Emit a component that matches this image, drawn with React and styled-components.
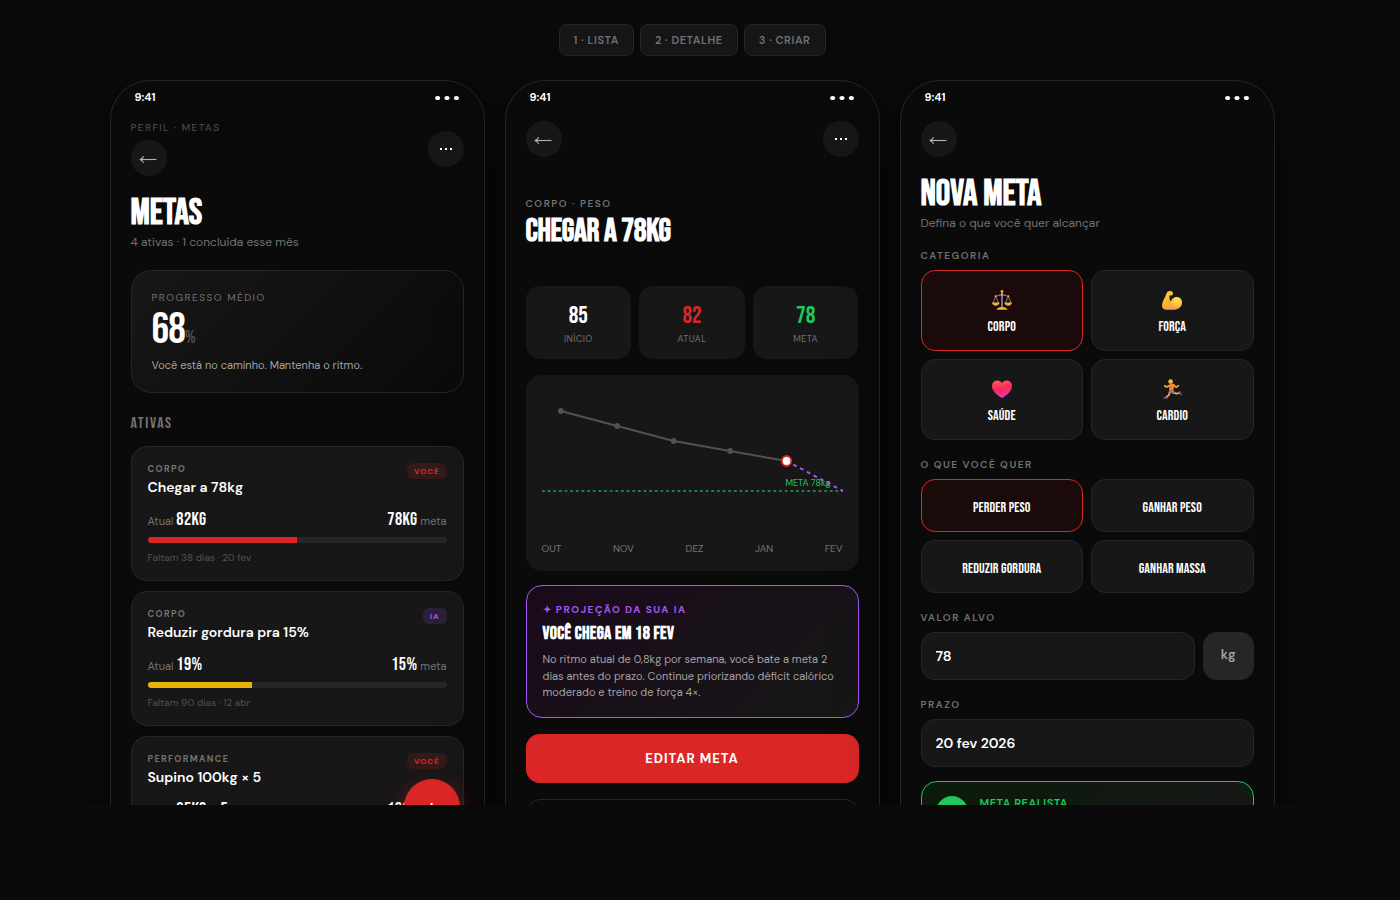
import React from "react";
import styled, { createGlobalStyle } from "styled-components";

const GlobalStyle = createGlobalStyle`
  * {
    box-sizing: border-box;
  }
  body {
    margin: 0;
    background: #0a0a0a;
    color: #fff;
    font-family: "DM Sans", "Open Sans", sans-serif;
  }
  h1, h2, h3, p {
    margin: 0;
  }
  button, input {
    font-family: inherit;
    margin: 0;
  }
  button {
    cursor: pointer;
  }
`;

const goals = [
  {
    category: "Corpo",
    title: "Chegar a 78kg",
    owner: "Você",
    current: "82KG",
    target: "78KG",
    unit: "meta",
    percent: 50,
    color: "#dc2626",
    footer: "Faltam 38 dias · 20 fev",
  },
  {
    category: "Corpo",
    title: "Reduzir gordura pra 15%",
    owner: "IA",
    current: "19%",
    target: "15%",
    unit: "meta",
    percent: 35,
    color: "#eab308",
    footer: "Faltam 90 dias · 12 abr",
  },
  {
    category: "Performance",
    title: "Supino 100kg × 5",
    owner: "Você",
    current: "85KG × 5",
    target: "100KG × 5",
    percent: 70,
    color: "#22c55e",
    footer: "Faltam 60 dias · 14 mar",
  },
];

const points = [
  [20, 20],
  [80, 35],
  [140, 50],
  [200, 60],
];

function BackButton() {
  return (
    <RoundButton aria-label="Voltar">
      <svg width="20" height="10" viewBox="0 0 20 10" fill="none" stroke="#b4b4b4" strokeWidth="1.1">
        <path d="M1 6.5h16.5" />
        <path d="M4.6 3.2C3.8 5 2.6 6.1.8 6.5 2.6 6.9 3.8 8 4.6 9.8" />
      </svg>
    </RoundButton>
  );
}

function MoreButton() {
  return (
    <RoundButton aria-label="Mais opções">
      <svg width="12" height="2" viewBox="0 0 12 2" fill="#fff">
        <rect width="2" height="2" />
        <rect x="5" width="2" height="2" />
        <rect x="10" width="2" height="2" />
      </svg>
    </RoundButton>
  );
}

function StatusBar() {
  return (
    <Status>
      <span>9:41</span>
      <svg width="25" height="6" viewBox="0 0 25 6" fill="#fff">
        <ellipse cx="2.6" cy="4" rx="2.6" ry="2.1" />
        <ellipse cx="12" cy="4" rx="2.6" ry="2.1" />
        <ellipse cx="21.4" cy="4" rx="2.6" ry="2.1" />
      </svg>
    </Status>
  );
}

function ScaleIcon() {
  return (
    <svg width="20" height="20" viewBox="0 0 20 20" fill="none">
      <path d="M10 2v16" stroke="#9b8aa3" strokeWidth="1.6" />
      <path d="M3.5 6.2C6 6.4 7 4.6 10 4.6s4 1.8 6.5 1.6" stroke="#8d7b97" strokeWidth="1.2" />
      <path d="M3.6 6.4L1 13M3.6 6.4L6.6 13M16.4 6.4L13.4 13M16.4 6.4L19 13" stroke="#a395ab" strokeWidth=".8" />
      <path d="M0 12.6h7.6c-.2 2-1.7 3.2-3.8 3.2S.2 14.6 0 12.6z" fill="#f5b13d" />
      <path d="M12.4 12.6H20c-.2 2-1.7 3.2-3.8 3.2s-3.6-1.2-3.8-3.2z" fill="#f5b13d" />
      <path d="M4.5 19.8c.4-1.9 2.6-2.9 5.5-2.9s5.1 1 5.5 2.9z" fill="#fbb82f" />
      <circle cx="10" cy="1.5" r="1.4" fill="#f9a83a" />
      <circle cx="10" cy="4.8" r="1.1" fill="#f9a83a" />
      <circle cx="3.6" cy="6.3" r="1" fill="#f9a83a" />
      <circle cx="16.4" cy="6.3" r="1" fill="#f9a83a" />
    </svg>
  );
}

function ArmIcon() {
  return (
    <svg width="20" height="20" viewBox="0 0 20 20">
      <defs>
        <linearGradient id="arm" x1="0" y1="0" x2="0.4" y2="1">
          <stop offset="0" stopColor="#ffd13d" />
          <stop offset=".7" stopColor="#fdb52f" />
          <stop offset="1" stopColor="#f29a5b" />
        </linearGradient>
        <radialGradient id="bicep" cx=".55" cy=".3" r=".7">
          <stop offset="0" stopColor="#ffe14f" />
          <stop offset="1" stopColor="#fdb833" />
        </radialGradient>
      </defs>
      <path
        d="M4.6 3.2C5.2 1.5 6.8.6 8.5 1c1.6.3 2.4 1.1 2.5 2.3.1 1.3-.6 2-1.8 2.1l-1.7.1c-.3 2 .1 4.2 1.2 6 1.4-3 3.6-4.7 6.3-4.5 3 .2 5 2.6 5 5.8 0 4.3-3.5 7-9 7H4.5C1.6 19.8 0 18 0 15.5 0 11.5 3.2 7.5 4.6 3.2z"
        fill="url(#arm)"
      />
      <circle cx="14.7" cy="12.2" r="5.2" fill="url(#bicep)" />
      <path d="M6 8.5c.2 2.2 1 4.1 2.7 5.7" stroke="#ee9a2d" strokeWidth=".7" fill="none" />
    </svg>
  );
}

function HeartIcon() {
  return (
    <svg width="20" height="20" viewBox="0 0 20 20">
      <defs>
        <linearGradient id="heart" x1="0.3" y1="0" x2="0.5" y2="1">
          <stop offset="0" stopColor="#ff5a5a" />
          <stop offset=".5" stopColor="#f8285a" />
          <stop offset="1" stopColor="#ee35c0" />
        </linearGradient>
      </defs>
      <path
        d="M10 4C8.9 2.3 7.3 1.4 5.3 1.4 2.2 1.4 0 3.8 0 7c0 5.4 5.4 9 8.5 11.3.9.7 2.1.7 3 0C14.6 16 20 12.4 20 7c0-3.2-2.2-5.6-5.3-5.6-2 0-3.6.9-4.7 2.6z"
        fill="url(#heart)"
      />
    </svg>
  );
}

function RunnerIcon() {
  return (
    <svg width="20" height="20" viewBox="0 0 20 20" fill="none" strokeLinecap="round" strokeLinejoin="round">
      <path d="M8.4 6.2L4.6 8 2.6 6.8" stroke="#f7ae2b" strokeWidth="1.7" />
      <path d="M11 13.5l3.5 1.2 3-.8" stroke="#f7ae2b" strokeWidth="1.8" />
      <path d="M8.3 13l-1.7 3.4-2.4 1.8" stroke="#f7ae2b" strokeWidth="1.8" />
      <path d="M17.6 12.8l1.6 2.7" stroke="#5b4a94" strokeWidth="1.7" />
      <path d="M2 18.6l2.8.8" stroke="#5b4a94" strokeWidth="1.7" />
      <path d="M7.4 11.2h4l1.8 2-2 1.9-1.8-1.5-1.7 1.4-1.7-.8z" fill="#8d8296" />
      <path d="M7.6 4.8l3.6-.4 1.3 2.3-1.3 4.8-4.2-.3z" fill="#fb7d3c" />
      <path d="M11.7 5.8l2.3 2.5 2.5-1.6" stroke="#f7ae2b" strokeWidth="1.6" />
      <circle cx="8.6" cy="2.5" r="2.3" fill="#fcb932" />
    </svg>
  );
}

function ListScreen() {
  return (
    <Phone>
      <StatusBar />
      <Content>
        <Header>
          <div>
            <Crumb>Perfil · Metas</Crumb>
            <BackButton />
          </div>
          <MoreButton />
        </Header>
        <Title>Metas</Title>
        <Subtitle>4 ativas · 1 concluída esse mês</Subtitle>

        <SummaryCard>
          <Label>Progresso médio</Label>
          <BigNumber>
            68<small>%</small>
          </BigNumber>
          <SummaryText>Você está no caminho. Mantenha o ritmo.</SummaryText>
        </SummaryCard>

        <SectionTitle>Ativas</SectionTitle>
        <GoalList>
          {goals.map((goal) => (
            <GoalCard key={goal.title}>
              <GoalTop>
                <div>
                  <GoalCategory>{goal.category}</GoalCategory>
                  <GoalTitle>{goal.title}</GoalTitle>
                </div>
                <Badge $ai={goal.owner === "IA"}>{goal.owner}</Badge>
              </GoalTop>
              <GoalValues>
                <span>
                  Atual <b>{goal.current}</b>
                </span>
                <span>
                  <b>{goal.target}</b> {goal.unit}
                </span>
              </GoalValues>
              <Track>
                <Fill $color={goal.color} style={{ width: `${goal.percent}%` }} />
              </Track>
              <GoalFooter>{goal.footer}</GoalFooter>
            </GoalCard>
          ))}
        </GoalList>
      </Content>
      <AddButton aria-label="Nova meta">+</AddButton>
    </Phone>
  );
}

function DetailScreen() {
  return (
    <Phone>
      <StatusBar />
      <Content>
        <Header>
          <BackButton />
          <MoreButton />
        </Header>
        <DetailHeading>
          <Label $weight={600}>Corpo · Peso</Label>
          <DetailTitle>Chegar a 78kg</DetailTitle>
        </DetailHeading>

        <Stats>
          <Stat $color="#fff">
            <b>85</b>
            <span>Início</span>
          </Stat>
          <Stat $color="#dc2626">
            <b>82</b>
            <span>Atual</span>
          </Stat>
          <Stat $color="#22c55e">
            <b>78</b>
            <span>Meta</span>
          </Stat>
        </Stats>

        <ChartCard>
          <Plot>
            <TargetLabel>META 78kg</TargetLabel>
            <svg viewBox="0 0 320 140" preserveAspectRatio="none">
              <path d="M0 100H320" stroke="#22c55e" strokeWidth="2" strokeDasharray="3 3" opacity=".6" />
              <path d="M20 20L80 35L140 50L200 60L260 70" stroke="#525252" strokeWidth="2" fill="none" />
              <path d="M260 70L320 100" stroke="#a855f7" strokeWidth="2" strokeDasharray="4 4" />
              {points.map(([x, y]) => (
                <circle key={x} cx={x} cy={y} r="3" fill="#525252" />
              ))}
              <circle cx="260" cy="70" r="5" fill="#fff" stroke="#dc2626" strokeWidth="2" />
            </svg>
          </Plot>
          <Months>
            <span>OUT</span>
            <span>NOV</span>
            <span>DEZ</span>
            <span>JAN</span>
            <span>FEV</span>
          </Months>
        </ChartCard>

        <Projection>
          <Label $weight={700} $color="#a855f7">
            ✦ Projeção da sua IA
          </Label>
          <h2>Você chega em 18 fev</h2>
          <p>
            No ritmo atual de 0,8kg por semana, você bate a meta 2 dias antes do
            prazo. Continue priorizando déficit calórico moderado e treino de
            força 4×.
          </p>
        </Projection>

        <PrimaryButton>Editar meta</PrimaryButton>
        <OutlineButton>Concluir meta</OutlineButton>
      </Content>
    </Phone>
  );
}

function CreateScreen() {
  return (
    <Phone>
      <StatusBar />
      <Content>
        <Header>
          <BackButton />
        </Header>
        <Title>Nova meta</Title>
        <Subtitle>Defina o que você quer alcançar</Subtitle>

        <Form>
          <Field>
            <Label $weight={600}>Categoria</Label>
            <Options>
              <Option $active aria-pressed="true">
                <Emoji><ScaleIcon /></Emoji>
                <span>Corpo</span>
              </Option>
              <Option>
                <Emoji><ArmIcon /></Emoji>
                <span>Força</span>
              </Option>
              <Option>
                <Emoji><HeartIcon /></Emoji>
                <span>Saúde</span>
              </Option>
              <Option>
                <Emoji><RunnerIcon /></Emoji>
                <span>Cardio</span>
              </Option>
            </Options>
          </Field>
          <Field>
            <Label $weight={600}>O que você quer</Label>
            <Options>
              <Option $active aria-pressed="true">
                <span>Perder peso</span>
              </Option>
              <Option>
                <span>Ganhar peso</span>
              </Option>
              <Option>
                <span>Reduzir gordura</span>
              </Option>
              <Option>
                <span>Ganhar massa</span>
              </Option>
            </Options>
          </Field>
          <Field>
            <Label as="label" htmlFor="valor" $weight={600}>
              Valor alvo
            </Label>
            <InputRow>
              <Input id="valor" defaultValue="78" />
              <Unit>kg</Unit>
            </InputRow>
          </Field>
          <Field>
            <Label as="label" htmlFor="prazo" $weight={600}>
              Prazo
            </Label>
            <Input id="prazo" defaultValue="20 fev 2026" />
          </Field>
        </Form>

        <Realistic>
          <Check />
          <div>
            <h3>Meta realista</h3>
            <p>Ritmo de 0,8kg por semana é saudável.</p>
          </div>
        </Realistic>
      </Content>
    </Phone>
  );
}

function App() {
  return (
    <Page>
      <GlobalStyle />
      <Tabs>
        <Tab>1 · Lista</Tab>
        <Tab>2 · Detalhe</Tab>
        <Tab>3 · Criar</Tab>
      </Tabs>
      <Phones>
        <ListScreen />
        <DetailScreen />
        <CreateScreen />
      </Phones>
    </Page>
  );
}

const Page = styled.main`
  height: calc(100vh - 95px);
  padding: 24px 16px 0 0;
  overflow: hidden;
`;
const Tabs = styled.nav`
  display: flex;
  justify-content: center;
  gap: 6px;
  margin-bottom: 24px;
`;
const Tab = styled.button`
  height: 32px;
  padding: 0 14px;
  border: 1px solid #262626;
  border-radius: 8px;
  background: #171717;
  color: #737373;
  font-size: 11px;
  font-weight: 600;
  letter-spacing: 0.05em;
  text-transform: uppercase;
`;
const Phones = styled.div`
  display: flex;
  justify-content: center;
  align-items: flex-start;
  gap: 20px;
`;
const Phone = styled.section`
  position: relative;
  flex: 0 1 375px;
  min-width: 0;
  min-height: 812px;
  background: #0a0a0a;
  border: 1px solid #262626;
  border-radius: 40px;
  box-shadow: 0 20px 60px rgba(0, 0, 0, 0.5);
`;
const Status = styled.div`
  height: 32px;
  padding: 0 24px;
  display: flex;
  justify-content: space-between;
  align-items: center;
  font-size: 11px;
  font-weight: 700;
`;
const Content = styled.div`
  padding: 8px 20px 20px;
`;
const Header = styled.header`
  display: flex;
  justify-content: space-between;
  align-items: center;
  margin-bottom: 20px;
`;
const Crumb = styled.div`
  margin-bottom: 6px;
  color: #525252;
  font-size: 10px;
  line-height: 13px;
  letter-spacing: 0.15em;
  text-transform: uppercase;
`;
const RoundButton = styled.button`
  width: 36px;
  height: 36px;
  padding: 0;
  display: flex;
  justify-content: center;
  align-items: center;
  border: none;
  border-radius: 50%;
  background: #171717;
`;
const Title = styled.h1`
  font-family: "Bebas Neue", sans-serif;
  font-size: 36px;
  line-height: 36px;
  text-transform: uppercase;
`;
const Subtitle = styled.p`
  color: #737373;
  font-size: 12px;
  line-height: 20px;
`;
const Label = styled.div`
  display: block;
  color: ${(props) => props.$color || "#737373"};
  font-size: 10px;
  font-weight: ${(props) => props.$weight || 400};
  line-height: 13px;
  letter-spacing: 0.15em;
  text-transform: uppercase;
`;
const SummaryCard = styled.div`
  margin-top: 18px;
  padding: 20px;
  border: 1px solid #262626;
  border-radius: 20px;
  background: linear-gradient(135deg, #171717, #0a0a0a);
`;
const BigNumber = styled.div`
  margin: 4px 0 6px;
  font-family: "Bebas Neue", sans-serif;
  font-size: 44px;
  line-height: 44px;
  letter-spacing: -0.02em;
  small {
    color: #525252;
    font-size: 18px;
    line-height: 18px;
  }
`;
const SummaryText = styled.p`
  color: #a3a3a3;
  font-size: 11px;
  line-height: 14px;
`;
const SectionTitle = styled.h2`
  margin: 21px 0 12px;
  color: #737373;
  font-family: "Bebas Neue", sans-serif;
  font-size: 16px;
  font-weight: 400;
  line-height: 20px;
  letter-spacing: 0.1em;
`;
const GoalList = styled.div`
  display: flex;
  flex-direction: column;
  gap: 10px;
`;
const GoalCard = styled.article`
  padding: 16px;
  border: 1px solid #262626;
  border-radius: 16px;
  background: #171717;
`;
const GoalTop = styled.div`
  display: flex;
  justify-content: space-between;
  align-items: flex-start;
  margin-bottom: 13px;
`;
const GoalCategory = styled.div`
  margin-bottom: 3px;
  color: #737373;
  font-size: 9px;
  font-weight: 700;
  line-height: 12px;
  letter-spacing: 0.15em;
  text-transform: uppercase;
`;
const GoalTitle = styled.h3`
  font-size: 14px;
  font-weight: 600;
  line-height: 18px;
`;
const Badge = styled.span`
  padding: 0 7px;
  border-radius: 6px;
  background: ${(props) => (props.$ai ? "rgba(168, 85, 247, 0.15)" : "rgba(220, 38, 38, 0.15)")};
  color: ${(props) => (props.$ai ? "#a855f7" : "#dc2626")};
  font-size: 8px;
  font-weight: 700;
  line-height: 16px;
  letter-spacing: 0.1em;
  text-transform: uppercase;
`;
const GoalValues = styled.div`
  display: flex;
  justify-content: space-between;
  margin-bottom: 6px;
  color: #737373;
  font-size: 11px;
  line-height: 16px;
  b {
    color: #fff;
    font-family: "Bebas Neue", sans-serif;
    font-size: 18px;
    font-weight: 400;
    line-height: 22px;
    letter-spacing: 0.02em;
  }
`;
const Track = styled.div`
  height: 6px;
  border-radius: 3px;
  background: #262626;
  overflow: hidden;
`;
const Fill = styled.div`
  height: 100%;
  background: ${(props) => props.$color};
`;
const GoalFooter = styled.p`
  margin-top: 8px;
  color: #525252;
  font-size: 10px;
  line-height: 13px;
`;
const AddButton = styled.button`
  position: absolute;
  right: 24px;
  bottom: 56px;
  width: 56px;
  height: 56px;
  padding: 0;
  border: none;
  border-radius: 50%;
  background: #dc2626;
  color: #fff;
  font-size: 24px;
  box-shadow: 0 8px 24px rgba(220, 38, 38, 0.4);
`;
const DetailHeading = styled.div`
  padding: 20px 0 38px;
`;
const DetailTitle = styled.h1`
  margin-top: 6px;
  font-family: "Bebas Neue", sans-serif;
  font-size: 32px;
  line-height: 32px;
  letter-spacing: -0.01em;
`;
const Stats = styled.div`
  display: grid;
  grid-template-columns: repeat(3, 1fr);
  gap: 8px;
`;
const Stat = styled.div`
  padding: 14px 8px 13px;
  border-radius: 14px;
  background: #171717;
  text-align: center;
  b {
    display: block;
    margin-bottom: 1px;
    color: ${(props) => props.$color};
    font-family: "Bebas Neue", sans-serif;
    font-size: 24px;
    font-weight: 400;
    line-height: 32px;
  }
  span {
    display: block;
    color: #737373;
    font-size: 9px;
    line-height: 13px;
    letter-spacing: 0.05em;
    text-transform: uppercase;
  }
`;
const ChartCard = styled.div`
  margin: 16px 0 14px;
  padding: 16px;
  border-radius: 16px;
  background: #171717;
`;
const Plot = styled.div`
  position: relative;
  svg {
    position: relative;
    display: block;
    width: 100%;
    height: 140px;
    overflow: visible;
  }
`;
const TargetLabel = styled.span`
  position: absolute;
  top: 86px;
  right: 12px;
  color: #22c55e;
  font-size: 9px;
  line-height: 12px;
`;
const Months = styled.div`
  display: flex;
  justify-content: space-between;
  margin-top: 11px;
  color: #737373;
  font-size: 10px;
  line-height: 13px;
`;
const Projection = styled.div`
  margin-bottom: 16px;
  padding: 17px 16px 16px;
  border: 1px solid #a855f7;
  border-radius: 16px;
  background: linear-gradient(135deg, #1a0a1a, #171717);
  h2 {
    margin: 7px 0 6px;
    font-family: "Bebas Neue", sans-serif;
    font-size: 18px;
    line-height: 22px;
    letter-spacing: 0.02em;
  }
  p {
    color: #a3a3a3;
    font-size: 11px;
    line-height: 1.5;
  }
`;
const PrimaryButton = styled.button`
  display: block;
  width: 100%;
  padding: 16px;
  border: none;
  border-radius: 14px;
  background: #dc2626;
  color: #fff;
  font-size: 13px;
  font-weight: 700;
  line-height: 17px;
  letter-spacing: 1px;
  text-transform: uppercase;
`;
const OutlineButton = styled(PrimaryButton)`
  margin-top: 16px;
  border: 1px solid #262626;
  background: transparent;
  color: #a3a3a3;
`;
const Form = styled.div`
  display: flex;
  flex-direction: column;
  gap: 18px;
  margin-top: 16px;
`;
const Field = styled.div`
  display: flex;
  flex-direction: column;
  gap: 8px;
`;
const Options = styled.div`
  display: grid;
  grid-template-columns: 1fr 1fr;
  gap: 8px;
`;
const Option = styled.button`
  padding: 16px;
  border: 1px solid ${(props) => (props.$active ? "#dc2626" : "#262626")};
  border-radius: 14px;
  background: ${(props) => (props.$active ? "#1a0a0a" : "#171717")};
  color: #fff;
  font-family: "Bebas Neue", sans-serif;
  font-size: 14px;
  line-height: 15px;
  letter-spacing: 0.01em;
  text-align: center;
  span {
    display: block;
    margin-top: 4px;
  }
`;
const Emoji = styled.div`
  height: 26px;
  margin-bottom: 6px;
  display: flex;
  justify-content: center;
  align-items: center;
`;
const InputRow = styled.div`
  display: flex;
  gap: 8px;
`;
const Input = styled.input`
  flex: 1 1 auto;
  min-width: 0;
  width: 100%;
  height: 48px;
  padding: 0 14px;
  border: 1px solid #262626;
  border-radius: 14px;
  background: #171717;
  color: #fff;
  font-size: 14px;
  font-weight: 600;
  outline: none;
`;
const Unit = styled.div`
  padding: 0 18px;
  border-radius: 14px;
  background: #262626;
  color: #a3a3a3;
  font-size: 13px;
  font-weight: 600;
  line-height: 46px;
`;
const Realistic = styled.div`
  display: flex;
  gap: 12px;
  margin-top: 14px;
  padding: 14px;
  border: 1px solid #22c55e;
  border-radius: 16px;
  background: linear-gradient(135deg, #0a1a0a, #171717);
  h3 {
    color: #22c55e;
    font-size: 11px;
    font-weight: 600;
    line-height: 14px;
    letter-spacing: 0.05em;
    text-transform: uppercase;
  }
  p {
    color: #a3a3a3;
    font-size: 11px;
    line-height: 18px;
  }
`;
const Check = styled.span`
  width: 32px;
  height: 32px;
  border-radius: 50%;
  background: #22c55e;
`;

export default App;
